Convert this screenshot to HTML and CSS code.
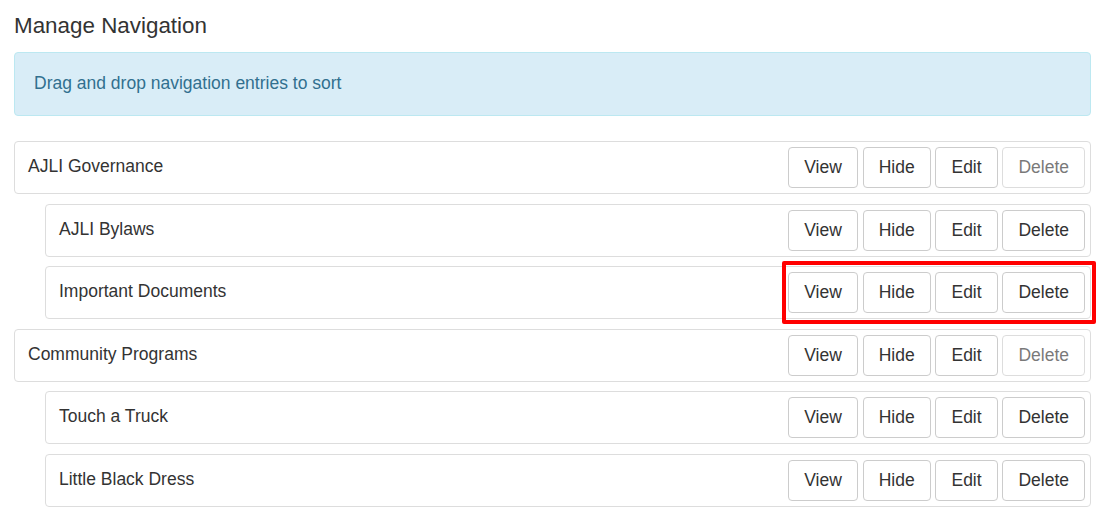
FILE: index.html
```html
<!DOCTYPE html>
<html>
<head>
<meta charset="utf-8">
<link rel="stylesheet" href="styles.css">
</head>
<body>
<div class="page">
  <h3 class="title">Manage Navigation</h3>
  <div class="alert">Drag and drop navigation entries to sort</div>
  <div class="nav-list">
    <div class="item">
      <span class="label">AJLI Governance</span>
      <div class="actions">
        <button class="btn">View</button><button class="btn">Hide</button><button class="btn">Edit</button><button class="btn disabled">Delete</button>
      </div>
    </div>
    <div class="item child">
      <span class="label">AJLI Bylaws</span>
      <div class="actions">
        <button class="btn">View</button><button class="btn">Hide</button><button class="btn">Edit</button><button class="btn">Delete</button>
      </div>
    </div>
    <div class="item child">
      <span class="label">Important Documents</span>
      <div class="actions highlighted">
        <button class="btn">View</button><button class="btn">Hide</button><button class="btn">Edit</button><button class="btn">Delete</button>
        <span class="highlight"></span>
      </div>
    </div>
    <div class="item">
      <span class="label">Community Programs</span>
      <div class="actions">
        <button class="btn">View</button><button class="btn">Hide</button><button class="btn">Edit</button><button class="btn disabled">Delete</button>
      </div>
    </div>
    <div class="item child">
      <span class="label">Touch a Truck</span>
      <div class="actions">
        <button class="btn">View</button><button class="btn">Hide</button><button class="btn">Edit</button><button class="btn">Delete</button>
      </div>
    </div>
    <div class="item child">
      <span class="label">Little Black Dress</span>
      <div class="actions">
        <button class="btn">View</button><button class="btn">Hide</button><button class="btn">Edit</button><button class="btn">Delete</button>
      </div>
    </div>
  </div>
</div>
</body>
</html>
```

FILE: styles.css
```css
* { box-sizing: border-box; }
html, body { margin: 0; padding: 0; background: #fff; }
body {
  font-family: "Liberation Sans", Arial, sans-serif;
  font-size: 17.5px;
  line-height: 25px;
  color: #333;
}
.page {
  padding: 0 13px 0 14px;
}
.title {
  margin: 13px 0 14px;
  font-size: 22.4px;
  font-weight: 400;
  line-height: 25px;
  color: #333;
}
.alert {
  background: #d9edf7;
  border: 1px solid #bce8f1;
  border-radius: 4px;
  color: #31708f;
  padding: 18px 19px 19px;
  margin-bottom: 25px;
}
.nav-list {
  display: flex;
  flex-direction: column;
  gap: 9.6px;
}
.item {
  display: flex;
  justify-content: space-between;
  align-items: flex-start;
  border: 1px solid #ddd;
  border-radius: 4px;
  padding: 5px 5px 5px 13px;
}
.item.child {
  margin-left: 31px;
}
.label {
  margin-top: 7px;
}
.actions {
  display: flex;
  gap: 4.8px;
  position: relative;
}
.btn {
  font-family: inherit;
  font-size: 17.5px;
  line-height: 23px;
  color: #333;
  background: #fff;
  border: 1px solid #ccc;
  border-radius: 4px;
  padding: 8px 15px;
  margin: 0;
  height: 41px;
}
.btn.disabled {
  opacity: 0.65;
}
.highlight {
  position: absolute;
  left: -6px;
  top: -11px;
  right: -11px;
  bottom: -11px;
  border: 4px solid #ff0000;
  border-radius: 2px;
  pointer-events: none;
}
```
